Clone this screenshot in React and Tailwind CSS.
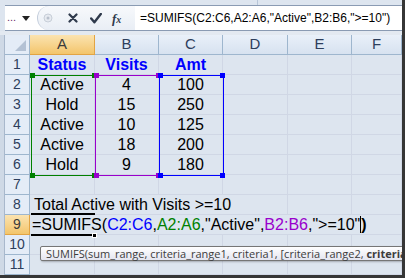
import React from "react";

const cols = [
  { id: "A", w: "w-[65px]" },
  { id: "B", w: "w-[64px]" },
  { id: "C", w: "w-[64px]" },
  { id: "D", w: "w-[65px]" },
  { id: "E", w: "w-[64px]" },
  { id: "F", w: "w-[50px]" },
];

const data = [
  ["Active", "4", "100"],
  ["Hold", "15", "250"],
  ["Active", "10", "125"],
  ["Active", "18", "200"],
  ["Hold", "9", "180"],
];

function RowHead({ n, active }) {
  return (
    <div
      className={
        "w-[25px] h-full flex items-center justify-center border-r border-b text-[14px] " +
        (active
          ? "bg-gradient-to-b from-[#fbe3b0] to-[#f3c56a] border-[#e2a444] text-[#3b3b3b]"
          : "bg-[#e4ecf7] border-[#9eb6ce] text-[#2d3e5c]")
      }
    >
      {n}
    </div>
  );
}

function Cell({ w, children, className = "" }) {
  return (
    <div
      className={`${w} h-full flex items-center justify-center border-r border-b border-[#d0d7e5] ${className}`}
    >
      {children}
    </div>
  );
}

function Row({ n, active, children }) {
  return (
    <div className="flex h-[20px]">
      <RowHead n={n} active={active} />
      {children}
    </div>
  );
}

function RangeBox({ left, width, color }) {
  const h = "absolute w-[5px] h-[5px]";
  return (
    <>
      <div
        className="absolute border"
        style={{ left, top: 40, width: width + 1, height: 101, borderColor: color }}
      />
      <div className={h} style={{ left: left - 1, top: 38, background: color }} />
      <div className={h} style={{ left: left + width - 3, top: 38, background: color }} />
      <div className={h} style={{ left: left - 1, top: 138, background: color }} />
      <div className={h} style={{ left: left + width - 3, top: 138, background: color }} />
    </>
  );
}

export default function App() {
  return (
    <div className="relative w-[405px] h-[278px] overflow-hidden bg-[#dde5ef] border-r-[3px] border-b-[3px] border-[#363636] font-['Liberation_Sans',Arial,sans-serif] text-black">
      {/* top band */}
      <div className="h-[5px] flex">
        <div className="w-[258px] border-r border-[#b8c6d8]" />
      </div>

      {/* formula bar */}
      <div className="ml-[5px] h-[26px] flex items-center bg-white border-y border-[#8a9bb3]">
        <div className="w-[32px] h-full flex items-center pl-[2px] gap-[6px]">
          <span className="text-[11px] text-[#6d2f6d] leading-none -mt-[2px]">...</span>
          <svg width="8" height="5" viewBox="0 0 8 5">
            <path d="M0 0h8L4 5z" fill="#222" />
          </svg>
        </div>
        <div className="w-[98px] h-full flex items-center bg-gradient-to-b from-[#f7f9fc] to-[#e9eef5] rounded-l-[12px] border-l border-[#c3cddb]">
          <svg width="16" height="20" viewBox="0 0 16 20" className="ml-[1px]">
            <circle cx="9" cy="10" r="4" fill="#e6eaf0" stroke="#c7ced8" />
            <circle cx="9" cy="10" r="1.5" fill="#b8c0cc" />
          </svg>
          <svg width="10" height="10" viewBox="0 0 10 10" className="ml-[13px]">
            <path d="M1.5 1.5l7 7M8.5 1.5l-7 7" stroke="#2f3a4c" strokeWidth="2.2" strokeLinecap="round" />
          </svg>
          <svg width="12" height="11" viewBox="0 0 12 11" className="ml-[12px]">
            <path d="M1.2 5.5l3.2 3.8L10.8 1" stroke="#2f3a4c" strokeWidth="2.4" fill="none" strokeLinecap="round" strokeLinejoin="round" />
          </svg>
          <span className="ml-[10px] font-['Liberation_Serif',serif] italic font-bold text-[13px] leading-none text-[#2f3a4c]">
            f<span className="text-[10px]">x</span>
          </span>
        </div>
        <div className="pl-[5px] text-[12px] leading-none whitespace-nowrap">
          =SUMIFS(C2:C6,A2:A6,"Active",B2:B6,"&gt;=10")
        </div>
      </div>

      <div className="h-[4px] bg-[#e3e9f1]" />

      {/* sheet */}
      <div className="flex">
        <div className="w-[5px] bg-[#cfd9e6] border-r border-[#a9b8cc]" />
        <div className="relative">
          <div className="flex h-[20px]">
            <div className="w-[25px] h-full bg-[#e4ecf7] border-r border-b border-[#9eb6ce] flex items-end justify-end pr-[3px] pb-[3px]">
              <svg width="11" height="11" viewBox="0 0 11 11">
                <path d="M11 0V11H0z" fill="#b3c1d4" />
              </svg>
            </div>
            {cols.map((c, i) => (
              <div
                key={c.id}
                className={
                  `${c.w} h-full flex items-center justify-center border-r border-b text-[15px] ` +
                  (i === 0
                    ? "bg-gradient-to-b from-[#fbe3b0] to-[#f3c56a] border-[#e2a444] text-[#3b3b3b]"
                    : "bg-gradient-to-b from-[#e9f0f9] to-[#d7e2f0] border-[#9eb6ce] text-[#2d3e5c]")
                }
              >
                {c.id}
              </div>
            ))}
          </div>

          <Row n={1}>
            {cols.map((c, i) => (
              <Cell key={c.id} w={c.w} className="font-bold text-[16px] text-[#0000ff]">
                {["Status", "Visits", "Amt"][i] || ""}
              </Cell>
            ))}
          </Row>

          {data.map((r, ri) => (
            <Row key={ri} n={ri + 2}>
              {cols.map((c, i) => (
                <Cell key={c.id} w={c.w} className="text-[16px]">
                  {r[i] || ""}
                </Cell>
              ))}
            </Row>
          ))}

          <Row n={7}>
            {cols.map((c) => (
              <Cell key={c.id} w={c.w} />
            ))}
          </Row>

          <Row n={8}>
            <div className="w-[258px] h-full border-r border-b border-[#d0d7e5] flex items-center pl-[4px] text-[16px] whitespace-nowrap">
              Total Active with Visits &gt;=10
            </div>
            <Cell w="w-[64px]" />
            <Cell w="w-[50px]" />
          </Row>

          <Row n={9} active>
            <div className="w-[372px] h-full border-r border-b border-[#d0d7e5] flex items-center pl-[2px] text-[16px] whitespace-nowrap">
              =SUMIFS(<span className="text-[#0000ff]">C2:C6</span>,
              <span className="text-[#008000]">A2:A6</span>,"Active",
              <span className="text-[#9900cc]">B2:B6</span>,"&gt;=10"
              <span className="inline-block w-[1px] h-[17px] bg-black" />
              <span className="font-bold">)</span>
            </div>
          </Row>

          {[10, 11].map((n) => (
            <Row key={n} n={n}>
              {cols.map((c) => (
                <Cell key={c.id} w={c.w} />
              ))}
            </Row>
          ))}

          {/* range highlights */}
          <RangeBox left={26} width={64} color="#008000" />
          <RangeBox left={90} width={64} color="#9900cc" />
          <RangeBox left={154} width={64} color="#0000ff" />

          {/* active cell A9 */}
          <div className="absolute left-[26px] top-[178px] w-[64px] h-[2px] bg-black" />
          <div className="absolute left-[26px] top-[199px] w-[61px] h-[2px] bg-black" />
          <div className="absolute left-[87px] top-[198px] w-[5px] h-[5px] bg-black border border-white" />
        </div>
      </div>

      {/* tooltip */}
      <div className="absolute left-[40px] top-[246px] h-[15px] w-[380px] rounded-[2px] border border-[#767676] bg-gradient-to-b from-white to-[#e4e5f0] shadow-[1px_1px_2px_rgba(0,0,0,0.25)] flex items-center pl-[5px] font-['Open_Sans','Noto_Sans',sans-serif] text-[11px] leading-none text-[#3c3c3c] whitespace-nowrap">
        SUMIFS(sum_range, criteria_range1, criteria1, [criteria_range2,&nbsp;
        <span className="font-bold">criteria2</span>
      </div>
    </div>
  );
}
